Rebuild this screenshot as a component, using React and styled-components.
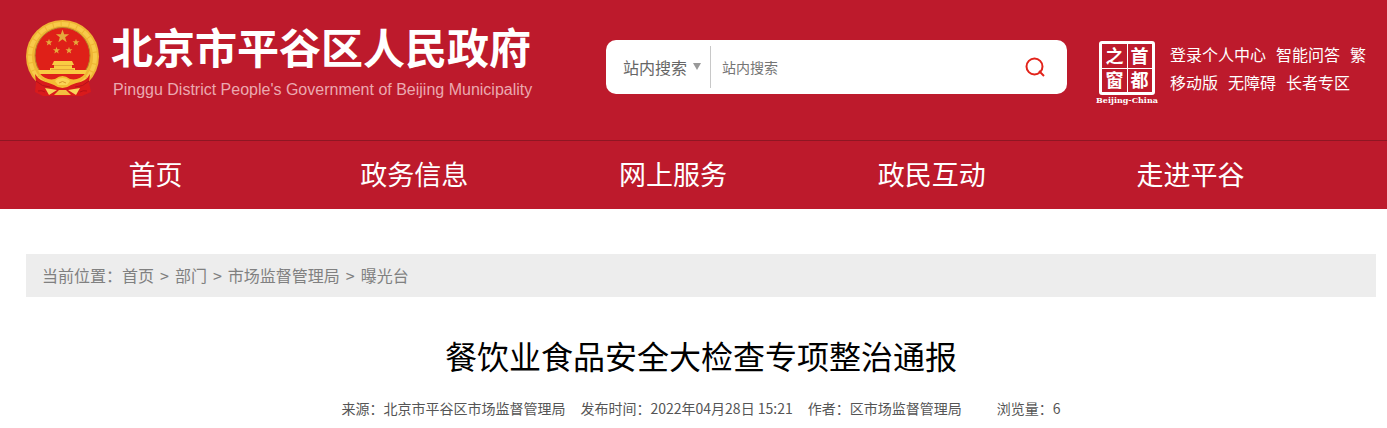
import React, { useState } from "react";
import styled, { createGlobalStyle } from "styled-components";

const GlobalStyle = createGlobalStyle`
  * {
    box-sizing: border-box;
  }

  body {
    margin: 0;
    background: #fff;
    font-family: "Noto Sans CJK SC", sans-serif;
  }

  a {
    color: inherit;
    text-decoration: none;
  }
`;

const Header = styled.header`
  background: #bd1a2c;
  color: #fff;
`;

const HeaderTop = styled.div`
  display: grid;
  grid-template-columns: 580fr 461fr 309fr;
  align-items: start;
  padding: 20px 11px 35px 26px;
`;

const Brand = styled.a`
  display: flex;
  gap: 11px;
  white-space: nowrap;

  svg {
    flex: none;
    width: 74px;
    height: 77px;
  }
`;

const BrandName = styled.span`
  display: block;
  font-size: 42px;
  font-weight: 700;
  line-height: 52px;
`;

const BrandSub = styled.span`
  display: block;
  padding: 4px 0 0 2px;
  color: #eba9b0;
  font-family: "Liberation Sans", sans-serif;
  font-size: 16px;
  line-height: 28px;
`;

const SearchForm = styled.form`
  display: flex;
  align-items: center;
  height: 54px;
  margin-top: 20px;
  padding: 0 20px 0 17px;
  background: #fff;
  border-radius: 10px;
`;

const Scope = styled.div`
  display: flex;
  align-items: center;
  height: 42px;
  padding-right: 9px;
  border-right: 1px solid #c8c8c8;

  select {
    appearance: none;
    width: 70px;
    padding: 0;
    border: 0;
    background: none;
    color: #666;
    font-family: inherit;
    font-size: 16px;
    line-height: 24px;
  }

  svg {
    width: 8px;
    height: 8px;
    pointer-events: none;
  }
`;

const SearchInput = styled.input`
  flex: 1;
  min-width: 0;
  height: 42px;
  padding: 0 11px;
  border: 0;
  outline: 0;
  color: #333;
  font-family: inherit;
  font-size: 14px;

  &::placeholder {
    color: #757575;
  }
`;

const SearchButton = styled.button`
  display: flex;
  padding: 0;
  border: 0;
  background: none;
  cursor: pointer;

  svg {
    width: 24px;
    height: 24px;
  }
`;

const Side = styled.div`
  display: flex;
  gap: 12px;
  margin-top: 20px;
  padding-left: 29px;
`;

const Seal = styled.a`
  display: flex;
  flex: none;
  flex-direction: column;
  align-items: center;
  width: 62px;
  padding-top: 1px;
`;

const SealGrid = styled.span`
  display: grid;
  grid-template-columns: 1fr 1fr;
  gap: 2px;
  width: 56px;
  height: 54px;
  padding: 1px;
  border: 3px solid #fff;
  border-radius: 3px;
  background: linear-gradient(#fff, #fff) center / 1px 100% no-repeat,
    linear-gradient(#fff, #fff) center / 100% 1px no-repeat;

  span {
    font-size: 18px;
    font-weight: 700;
    line-height: 20px;
    text-align: center;
  }
`;

const SealCaption = styled.span`
  font-family: "DejaVu Serif", serif;
  font-size: 8px;
  font-weight: 700;
  line-height: 10px;
  white-space: nowrap;
`;

const QuickLinks = styled.nav`
  font-size: 16px;
  line-height: 28px;
  white-space: nowrap;

  div {
    display: flex;
    gap: 10px;
  }
`;

const MainNav = styled.nav`
  border-top: 1px solid #8f1623;
  padding: 0 67px 2px 26px;

  ul {
    display: flex;
    margin: 0;
    padding: 0;
    list-style: none;
  }

  li {
    flex: 1;
    font-size: 27px;
    line-height: 66px;
    text-align: center;
  }
`;

const Content = styled.main`
  padding: 45px 11px 0 26px;
`;

const Breadcrumb = styled.nav`
  display: flex;
  padding: 0 16px;
  background: #ededed;
  color: #808080;
  font-size: 16px;
  line-height: 43px;

  ol {
    display: flex;
    margin: 0;
    padding: 0;
    list-style: none;
  }

  li + li::before {
    content: ">";
    padding: 0 6px;
  }
`;

const Title = styled.h1`
  margin: 34px 0 0;
  color: #000;
  font-size: 32px;
  font-weight: 400;
  line-height: 48px;
  text-align: center;
`;

const Meta = styled.div`
  display: flex;
  justify-content: center;
  gap: 15px;
  margin-top: 17px;
  color: #555;
  font-size: 14px;
  line-height: 24px;
  white-space: nowrap;
`;

const Views = styled.span`
  padding-left: 20px;
`;

const star = (cx, cy, r) =>
  Array.from({ length: 10 }, (_, i) => {
    const radius = i % 2 ? r * 0.4 : r;
    const angle = (Math.PI / 5) * i - Math.PI / 2;
    return `${cx + radius * Math.cos(angle)},${cy + radius * Math.sin(angle)}`;
  }).join(" ");

const Emblem = () => (
  <svg viewBox="0 0 74 77" aria-hidden="true">
    <ellipse cx="36.5" cy="36.5" rx="36.5" ry="36.5" fill="#efb534" />
    <ellipse cx="36.5" cy="36.5" rx="32.5" ry="32.5" fill="none" stroke="#f8ca4a" strokeWidth="4" strokeDasharray="7 1" />
    <ellipse cx="36.5" cy="35.5" rx="27.5" ry="28" fill="#df2018" stroke="#b9832b" />
    <g fill="#e5a93c">
      <polygon points={star(36.5, 16.5, 7)} />
      <polygon points={star(23, 22.5, 3.7)} />
      <polygon points={star(50, 22.5, 3.7)} />
      <polygon points={star(30.5, 30.5, 3.7)} />
      <polygon points={star(43, 30.5, 3.7)} />
    </g>
    <path d="M28 41H46L48 45H46V48H49V50H61L59 54H14L12 50H24V48H28V45H26Z" fill="#f9cb43" />
    <path d="M28 45.5H46M25 49.5H48" stroke="#e3a535" />
    <path d="M14 54H59L53 61H20Z" fill="#df2018" />
    <path d="M9 54L10 62L9 72L17 76H56L65 72L63 62L64 54Q60 62 50 63H24Q14 62 9 54Z" fill="#d91a1b" />
    <path d="M13 53Q20 61 29 59Q33 56 36.5 56Q40 56 44 59Q53 61 60 53Q56 62 45 65Q41 68 36.5 68Q32 68 28 65Q17 62 13 53Z" fill="#f4bd34" />
    <path d="M29 61Q32 58 36.5 58Q41 58 44 61L41 65H32Z" fill="#fbd454" />
    <path d="M33 63Q36.5 60 40 63" fill="none" stroke="#d9952a" />
    <path d="M10 61Q16 67 24 67M63 61Q57 67 49 67M12 71Q16 70 19 72M61 71Q57 70 54 72" fill="none" stroke="#b41219" />
    <path d="M19 68L31 70L23 75ZM54 68L42 70L50 75Z" fill="#f9d55b" />
    <path d="M28 75L33 70H40L45 75Z" fill="#f2c040" />
  </svg>
);

const navItems = ["首页", "政务信息", "网上服务", "政民互动", "走进平谷"];
const quickLinks = [
  ["登录个人中心", "智能问答", "繁"],
  ["移动版", "无障碍", "长者专区"]
];
const crumbs = ["首页", "部门", "市场监督管理局", "曝光台"];

const App = () => {
  const [keyword, setKeyword] = useState("");

  return (
    <>
      <GlobalStyle />
      <Header>
        <HeaderTop>
          <Brand href="#">
            <Emblem />
            <span>
              <BrandName>北京市平谷区人民政府</BrandName>
              <BrandSub>Pinggu District People's Government of Beijing Municipality</BrandSub>
            </span>
          </Brand>
          <SearchForm onSubmit={e => e.preventDefault()}>
            <Scope>
              <select aria-label="搜索范围">
                <option>站内搜索</option>
              </select>
              <svg viewBox="0 0 8 8" aria-hidden="true">
                <path d="M0 0H8L4 7Z" fill="#999" />
              </svg>
            </Scope>
            <SearchInput
              aria-label="站内搜索"
              placeholder="站内搜索"
              value={keyword}
              onChange={e => setKeyword(e.target.value)}
            />
            <SearchButton aria-label="搜索">
              <svg viewBox="0 0 24 24" fill="none" stroke="#e2231a" strokeWidth="2">
                <circle cx="11.5" cy="11.5" r="8" />
                <path d="M16 16L21 21" />
              </svg>
            </SearchButton>
          </SearchForm>
          <Side>
            <Seal href="#">
              <SealGrid>
                <span>之</span>
                <span>首</span>
                <span>窗</span>
                <span>都</span>
              </SealGrid>
              <SealCaption>Beijing-China</SealCaption>
            </Seal>
            <QuickLinks>
              {quickLinks.map(row => (
                <div key={row[0]}>
                  {row.map(link => (
                    <a href="#" key={link}>
                      {link}
                    </a>
                  ))}
                </div>
              ))}
            </QuickLinks>
          </Side>
        </HeaderTop>
        <MainNav>
          <ul>
            {navItems.map(item => (
              <li key={item}>
                <a href="#">{item}</a>
              </li>
            ))}
          </ul>
        </MainNav>
      </Header>
      <Content>
        <Breadcrumb>
          <span>当前位置：</span>
          <ol>
            {crumbs.map(crumb => (
              <li key={crumb}>
                <a href="#">{crumb}</a>
              </li>
            ))}
          </ol>
        </Breadcrumb>
        <Title>餐饮业食品安全大检查专项整治通报</Title>
        <Meta>
          <span>来源：北京市平谷区市场监督管理局</span>
          <span>发布时间：2022年04月28日 15:21</span>
          <span>作者：区市场监督管理局</span>
          <Views>浏览量：6</Views>
        </Meta>
      </Content>
    </>
  );
};

export default App;
